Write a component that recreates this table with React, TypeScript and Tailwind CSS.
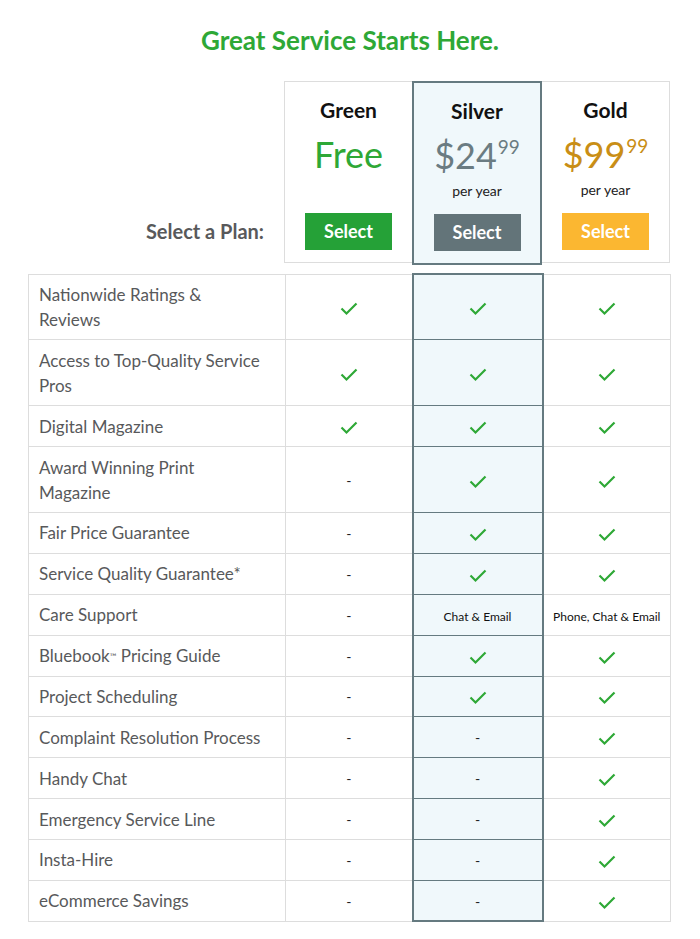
import React from 'react';

type Cell = 'check' | 'dash' | string;

interface Feature {
  label: React.ReactNode;
  green: Cell;
  silver: Cell;
  gold: Cell;
}

const FEATURES: Feature[] = [
  { label: <>Nationwide Ratings &amp;<br />Reviews</>, green: 'check', silver: 'check', gold: 'check' },
  { label: <>Access to Top-Quality Service<br />Pros</>, green: 'check', silver: 'check', gold: 'check' },
  { label: 'Digital Magazine', green: 'check', silver: 'check', gold: 'check' },
  { label: <>Award Winning Print<br />Magazine</>, green: 'dash', silver: 'check', gold: 'check' },
  { label: 'Fair Price Guarantee', green: 'dash', silver: 'check', gold: 'check' },
  { label: 'Service Quality Guarantee*', green: 'dash', silver: 'check', gold: 'check' },
  { label: 'Care Support', green: 'dash', silver: 'Chat & Email', gold: 'Phone, Chat & Email' },
  { label: <>Bluebook<sup className="text-[9px] relative -top-[2px]">™</sup> Pricing Guide</>, green: 'dash', silver: 'check', gold: 'check' },
  { label: 'Project Scheduling', green: 'dash', silver: 'check', gold: 'check' },
  { label: 'Complaint Resolution Process', green: 'dash', silver: 'dash', gold: 'check' },
  { label: 'Handy Chat', green: 'dash', silver: 'dash', gold: 'check' },
  { label: 'Emergency Service Line', green: 'dash', silver: 'dash', gold: 'check' },
  { label: 'Insta-Hire', green: 'dash', silver: 'dash', gold: 'check' },
  { label: 'eCommerce Savings', green: 'dash', silver: 'dash', gold: 'check' },
];

function Check() {
  return (
    <svg viewBox="0 0 18 14" className="w-[18px] h-[14px] inline-block" fill="none">
      <path d="M1.5 6.5 L6.5 11.5 L16.5 1.5" stroke="#2ea836" strokeWidth="2.2" />
    </svg>
  );
}

function CellContent({ value }: { value: Cell }) {
  if (value === 'check') return <Check />;
  if (value === 'dash') return <span className="text-[14px] text-[#222]">-</span>;
  return <span className="text-[12px] text-[#111] whitespace-nowrap">{value}</span>;
}

function PlanHeader({
  name,
  price,
  cents,
  priceColor,
  perYear,
  buttonColor,
}: {
  name: string;
  price: string;
  cents?: string;
  priceColor: string;
  perYear: boolean;
  buttonColor: string;
}) {
  return (
    <div className="flex flex-col items-center h-full pt-[15px] pb-[12px]">
      <div className="text-[21px] leading-[26px] font-bold text-[#111]">{name}</div>
      <div className={`mt-[11px] text-[36px] leading-[40px] flex items-start ${priceColor}`}>
        <span>{price}</span>
        {cents && <span className="text-[19px] leading-[24px] ml-[1px]">{cents}</span>}
      </div>
      {perYear && <div className="mt-[8px] text-[14px] leading-[16px] text-[#222]">per year</div>}
      <button className={`mt-auto w-[87px] h-[37px] text-white font-bold text-[18px] ${buttonColor}`}>
        Select
      </button>
    </div>
  );
}

export default function App() {
  return (
    <div className="w-[700px] h-[939px] bg-white" style={{ fontFamily: 'Lato, "Open Sans", sans-serif' }}>
      <h1 className="pt-[24px] text-center text-[26px] leading-[32px] font-bold text-[#2ea836]">
        Great Service Starts Here.
      </h1>

      <div className="ml-[28px] mt-[25px] flex w-[642px]">
        <div className="w-[256px] flex flex-col justify-end items-end pr-[20px] pb-[19px]">
          <div className="text-[20px] leading-[26px] font-bold text-[#58595b]">Select a Plan:</div>
        </div>
        <div className="w-[386px] h-[182px] border border-[#dddddd] flex">
          <div className="w-[127px]">
            <PlanHeader name="Green" price="Free" priceColor="text-[#2ea836]" perYear={false} buttonColor="bg-[#25a137]" />
          </div>
          <div className="w-[130px] -mt-px -mb-[3px] border-2 border-[#657a80] bg-[#f0f8fb]">
            <PlanHeader name="Silver" price="$24" cents="99" priceColor="text-[#6b7c82]" perYear buttonColor="bg-[#637479]" />
          </div>
          <div className="flex-1">
            <PlanHeader name="Gold" price="$99" cents="99" priceColor="text-[#c98e16]" perYear buttonColor="bg-[#fbb731]" />
          </div>
        </div>
      </div>

      <table className="ml-[28px] mt-[10px] w-[642px] table-fixed border-collapse">
        <colgroup>
          <col className="w-[257px]" />
          <col className="w-[127px]" />
          <col className="w-[130px]" />
          <col className="w-[128px]" />
        </colgroup>
        <tbody>
          {FEATURES.map((f, i) => {
            const first = i === 0;
            const last = i === FEATURES.length - 1;
            return (
              <tr key={i}>
                <td className="border border-[#dddddd] pl-[10px] py-[7.45px] text-[17px] leading-[25px] text-[#58595b] whitespace-nowrap">
                  {f.label}
                </td>
                <td className="border border-[#dddddd] text-center align-middle">
                  <CellContent value={f.green} />
                </td>
                <td
                  className={`border-x-2 border-y border-[#657a80] bg-[#f0f8fb] text-center align-middle ${
                    first ? 'border-t-2' : ''
                  } ${last ? 'border-b-2' : ''}`}
                >
                  <CellContent value={f.silver} />
                </td>
                <td className="border border-[#dddddd] text-center align-middle">
                  <CellContent value={f.gold} />
                </td>
              </tr>
            );
          })}
        </tbody>
      </table>
    </div>
  );
}
